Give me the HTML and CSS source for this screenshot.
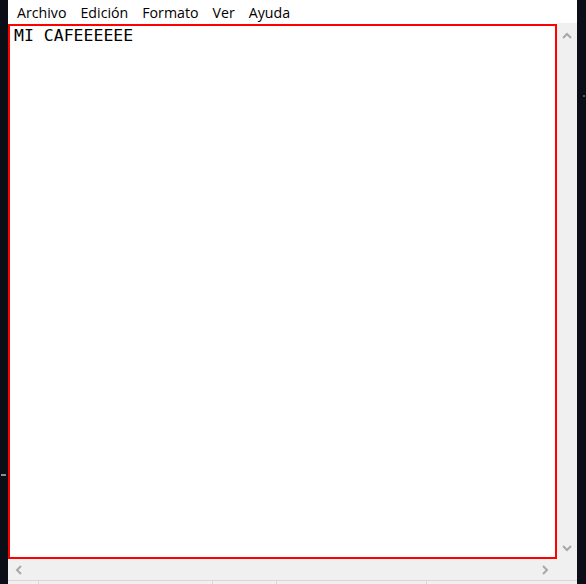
FILE: index.html
```html
<!DOCTYPE html>
<html lang="es">
<head>
<meta charset="utf-8">
<title>Bloc de notas</title>
<link rel="stylesheet" href="styles.css">
</head>
<body>
<div class="desk">
  <div class="strip strip-left"><span class="mark mark-left"></span></div>
  <div class="win">
    <nav class="menu">
      <span class="item">Archivo</span>
      <span class="item">Edición</span>
      <span class="item">Formato</span>
      <span class="item">Ver</span>
      <span class="item">Ayuda</span>
    </nav>
    <div class="main">
      <div class="editor">MI CAFEEEEEE</div>
      <div class="vscroll">
        <svg class="chev" width="10" height="7" viewBox="0 0 10 7"><path d="M1 6 L5 2 L9 6" fill="none" stroke="#a8a8a8" stroke-width="2"/></svg>
        <svg class="chev" width="10" height="7" viewBox="0 0 10 7"><path d="M1 1 L5 5 L9 1" fill="none" stroke="#a8a8a8" stroke-width="2"/></svg>
      </div>
    </div>
    <div class="hrow">
      <div class="hscroll">
        <svg class="chev" width="7" height="10" viewBox="0 0 7 10"><path d="M6 1 L2 5 L6 9" fill="none" stroke="#a8a8a8" stroke-width="2"/></svg>
        <svg class="chev" width="7" height="10" viewBox="0 0 7 10"><path d="M1 1 L5 5 L1 9" fill="none" stroke="#a8a8a8" stroke-width="2"/></svg>
      </div>
      <div class="corner"></div>
    </div>
    <div class="status">
      <span class="cell c1"></span>
      <span class="cell c2"></span>
      <span class="cell c3"></span>
      <span class="cell c4"></span>
      <span class="cell c5"></span>
    </div>
  </div>
  <div class="strip strip-right"><span class="mark mark-right"></span></div>
</div>
</body>
</html>
```

FILE: styles.css
```css
html, body {
  margin: 0;
  padding: 0;
  background: #0b0e16;
}

.desk {
  display: grid;
  grid-template-columns: 8px 569px 9px;
  height: 584px;
  overflow: hidden;
}

.strip {
  background: #0b0e16;
  position: relative;
}

.mark {
  position: absolute;
  display: block;
}

.mark-left {
  left: 1px;
  top: 474px;
  width: 5px;
  height: 2px;
  background: #8a8c90;
}

.mark-right {
  left: 6px;
  top: 95px;
  width: 2px;
  height: 2px;
  background: #3b5f8c;
}

.win {
  display: flex;
  flex-direction: column;
  background: #ffffff;
}

.menu {
  box-sizing: border-box;
  height: 24px;
  display: flex;
  align-items: stretch;
  padding: 1px 0 0 2px;
  font-family: "Open Sans", "Noto Sans", sans-serif;
  font-size: 14.2px;
  line-height: 23px;
  color: #000000;
  background: #ffffff;
}

.item {
  padding: 0 7px;
}

.main {
  display: flex;
  height: 535px;
}

.editor {
  flex: 1;
  border: 2px solid #ff0000;
  background: #ffffff;
  padding: 0 4px;
  font-family: "DejaVu Sans Mono", "Liberation Mono", monospace;
  font-size: 16.5px;
  line-height: 20px;
  color: #000000;
  white-space: pre;
}

.vscroll {
  width: 20px;
  margin-top: -1px;
  background: #f0f0f0;
  display: flex;
  flex-direction: column;
  justify-content: space-between;
  align-items: center;
  padding: 9px 0 7px;
}

.chev {
  display: block;
}

.hrow {
  display: flex;
  height: 21px;
}

.hscroll {
  flex: 1;
  background: #f0f0f0;
  display: flex;
  justify-content: space-between;
  align-items: center;
  padding: 0 8px 0 7px;
}

.corner {
  width: 20px;
  background: #f0f0f0;
}

.status {
  height: 3px;
  border-top: 1px solid #d7d7d7;
  background: #f0f0f0;
  display: flex;
}

.cell {
  border-right: 1px solid #d7d7d7;
}

.c1 { width: 30px; }
.c2 { width: 173px; }
.c3 { width: 63px; }
.c4 { width: 149px; }
.c5 { flex: 1; border-right: none; }
```
